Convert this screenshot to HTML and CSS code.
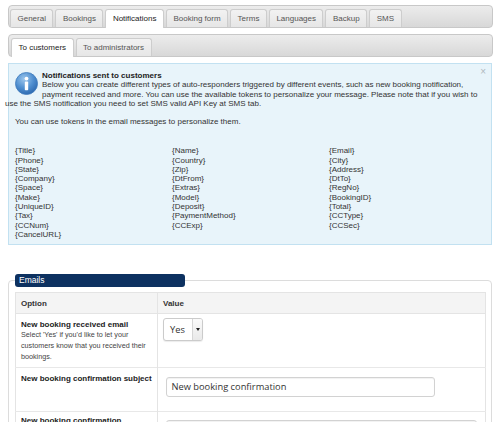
FILE: index.html
```html
<!DOCTYPE html>
<html>
<head>
<meta charset="utf-8">
<title>Notifications</title>
<link rel="stylesheet" href="styles.css">
</head>
<body>
<div class="page">
  <div class="tabbar main">
    <span class="tab">General</span>
    <span class="tab">Bookings</span>
    <span class="tab active">Notifications</span>
    <span class="tab">Booking form</span>
    <span class="tab">Terms</span>
    <span class="tab">Languages</span>
    <span class="tab">Backup</span>
    <span class="tab">SMS</span>
  </div>
  <div class="tabbar sub">
    <span class="tab active">To customers</span>
    <span class="tab">To administrators</span>
  </div>

  <div class="info">
    <span class="close">×</span>
    <div class="intro">
      <div class="icon">
        <svg width="23" height="23" viewBox="0 0 23 23">
          <defs>
            <radialGradient id="g" cx="0.4" cy="0.3" r="0.75">
              <stop offset="0" stop-color="#9cc6ec"/>
              <stop offset="0.55" stop-color="#4f8fd0"/>
              <stop offset="1" stop-color="#2a66ad"/>
            </radialGradient>
          </defs>
          <circle cx="11.5" cy="11.5" r="11" fill="url(#g)" stroke="#3f7bbd" stroke-width="0.8"/>
          <circle cx="11.5" cy="6.6" r="1.9" fill="#fff"/>
          <rect x="9.8" y="9.6" width="3.4" height="8.6" rx="0.8" fill="#fff"/>
        </svg>
      </div>
      <div class="title">Notifications sent to customers</div>
      <p class="desc">Below you can create different types of auto-responders triggered by different events, such as new booking notification, payment received and more. You can use the available tokens to personalize your message. Please note that if you wish to use the SMS notification you need to set SMS valid API Key at SMS tab.</p>
    </div>
    <p class="use">You can use tokens in the email messages to personalize them.</p>
    <div class="tokens">
      <span>{Title}</span><span>{Name}</span><span>{Email}</span>
      <span>{Phone}</span><span>{Country}</span><span>{City}</span>
      <span>{State}</span><span>{Zip}</span><span>{Address}</span>
      <span>{Company}</span><span>{DtFrom}</span><span>{DtTo}</span>
      <span>{Space}</span><span>{Extras}</span><span>{RegNo}</span>
      <span>{Make}</span><span>{Model}</span><span>{BookingID}</span>
      <span>{UniqueID}</span><span>{Deposit}</span><span>{Total}</span>
      <span>{Tax}</span><span>{PaymentMethod}</span><span>{CCType}</span>
      <span>{CCNum}</span><span>{CCExp}</span><span>{CCSec}</span>
      <span>{CancelURL}</span>
    </div>
  </div>

  <fieldset class="emails">
    <legend>Emails</legend>
    <table class="opts">
      <thead>
        <tr><th class="c1">Option</th><th>Value</th></tr>
      </thead>
      <tbody>
        <tr class="r1">
          <td class="c1">
            <div class="lbl">New booking received email</div>
            <div class="hint">Select 'Yes' if you'd like to let your customers know that you received their bookings.</div>
          </td>
          <td class="val">
            <div class="select"><span class="sel-text">Yes</span><span class="sel-btn"><span class="caret"></span></span></div>
          </td>
        </tr>
        <tr class="r2">
          <td class="c1"><div class="lbl">New booking confirmation subject</div></td>
          <td class="val"><div class="input">New booking confirmation</div></td>
        </tr>
        <tr class="r3">
          <td class="c1"><div class="lbl">New booking confirmation message</div></td>
          <td class="val"><div class="textarea"></div></td>
        </tr>
      </tbody>
    </table>
  </fieldset>
</div>
</body>
</html>
```

FILE: styles.css
```css
html, body {
  margin: 0;
  padding: 0;
  background: #fff;
}
body {
  font-family: "Liberation Sans", Arial, sans-serif;
  color: #333;
}
.page {
  padding: 5px 7px 0 8px;
}

/* tab bars */
.tabbar {
  display: flex;
  align-items: flex-end;
  gap: 2px;
  height: 23px;
  box-sizing: border-box;
  border: 1px solid #c8c8c8;
  border-radius: 4px;
  background: linear-gradient(#ececec, #d8d8d8);
  padding-left: 1px;
}
.tabbar.sub {
  margin-top: 6px;
  padding-left: 2px;
}
.tab {
  height: 18px;
  box-sizing: border-box;
  padding: 0 6.5px;
  border: 1px solid #cdcdcd;
  border-bottom: none;
  border-radius: 3px 3px 0 0;
  background: linear-gradient(#f2f2f2, #e6e6e6);
  font-size: 8px;
  line-height: 17px;
  color: #555;
  white-space: nowrap;
}
.tab.active {
  height: 19px;
  margin-bottom: -1px;
  background: #fff;
  color: #222;
}

/* info box */
.info {
  position: relative;
  margin: 6px 1px 0 0;
  border: 1px solid #c2e1f1;
  background: #e8f4fa;
  padding: 7px 5px 5px 6px;
  font-size: 8px;
  line-height: 9.3px;
  color: #333;
}
.close {
  position: absolute;
  top: 3px;
  right: 5px;
  font-size: 10px;
  line-height: 10px;
  color: #b0b8bd;
}
.intro {
  margin-left: -10px;
  margin-right: 2px;
}
.icon {
  float: left;
  width: 27px;
  height: 24px;
  padding: 1px 0 1px 10px;
}
.icon svg {
  display: block;
}
.title {
  font-weight: bold;
  color: #222;
}
.desc {
  margin: 0;
}
.use {
  margin: 9.3px 0 0 0;
  clear: both;
}
.tokens {
  display: grid;
  grid-template-columns: 1fr 1fr 1fr;
  margin-top: 19.5px;
}

/* emails fieldset */
.emails {
  margin: 29px 1px 0 0;
  border: 1px solid #dcdcdc;
  border-radius: 4px;
  padding: 5px 5px 0 6px;
  min-width: 0;
}
.emails legend {
  box-sizing: border-box;
  width: 170px;
  height: 13px;
  padding: 0 0 0 4px;
  background: #0d3160;
  color: #fff;
  font-size: 8.5px;
  line-height: 13px;
  border-radius: 3px;
}
.opts {
  width: 100%;
  border-collapse: collapse;
  border: 1px solid #e4e4e4;
  font-size: 8px;
}
.opts th {
  height: 20px;
  background: #f4f4f4;
  text-align: left;
  font-weight: bold;
  padding: 0 5px;
  border-bottom: 1px solid #e4e4e4;
  color: #333;
}
.opts td {
  vertical-align: top;
  border-top: 1px solid #e8e8e8;
  padding: 5.5px 5px 0 5px;
}
.opts .c1 {
  width: 131px;
  border-right: 1px solid #e4e4e4;
}
.lbl {
  font-weight: bold;
  line-height: 9.3px;
  color: #222;
}
.hint {
  font-size: 7.2px;
  line-height: 11px;
  color: #444;
  padding-bottom: 5px;
}
.r1 .val {
  padding: 4px 5px 0 5px;
}
.select {
  display: flex;
  width: 40px;
  height: 23px;
  box-sizing: border-box;
  border: 1px solid #cbcbcb;
  border-radius: 3px;
  background: #fff;
  box-shadow: 0 1px 1px rgba(0,0,0,0.08);
}
.sel-text {
  flex: 1;
  font-family: "Open Sans", "Liberation Sans", sans-serif;
  font-size: 9.3px;
  line-height: 21px;
  padding-left: 6px;
  color: #333;
}
.sel-btn {
  width: 9px;
  border-left: 1px solid #d6d6d6;
  background: linear-gradient(#fafafa, #e9e9e9);
  border-radius: 0 2px 2px 0;
  display: flex;
  align-items: center;
  justify-content: center;
}
.caret {
  width: 0;
  height: 0;
  border-left: 2.5px solid transparent;
  border-right: 2.5px solid transparent;
  border-top: 3px solid #222;
}
.r2 .val {
  padding: 8.5px 5px 14px 7.5px;
}
.input {
  width: 269px;
  height: 20px;
  box-sizing: border-box;
  border: 1px solid #d2d2d2;
  border-radius: 3px;
  padding: 0 5px;
  font-family: "Open Sans", "Liberation Sans", sans-serif;
  font-size: 9.3px;
  line-height: 18px;
  color: #333;
  box-shadow: inset 0 1px 1px rgba(0,0,0,0.06);
}
.r3 td.c1 {
  padding-top: 4px;
}
.r3 .val {
  padding: 8.5px 8px 0 7.5px;
}
.textarea {
  height: 40px;
  box-sizing: border-box;
  border: 1px solid #d2d2d2;
  border-radius: 3px;
  box-shadow: inset 0 1px 1px rgba(0,0,0,0.06);
}
```
